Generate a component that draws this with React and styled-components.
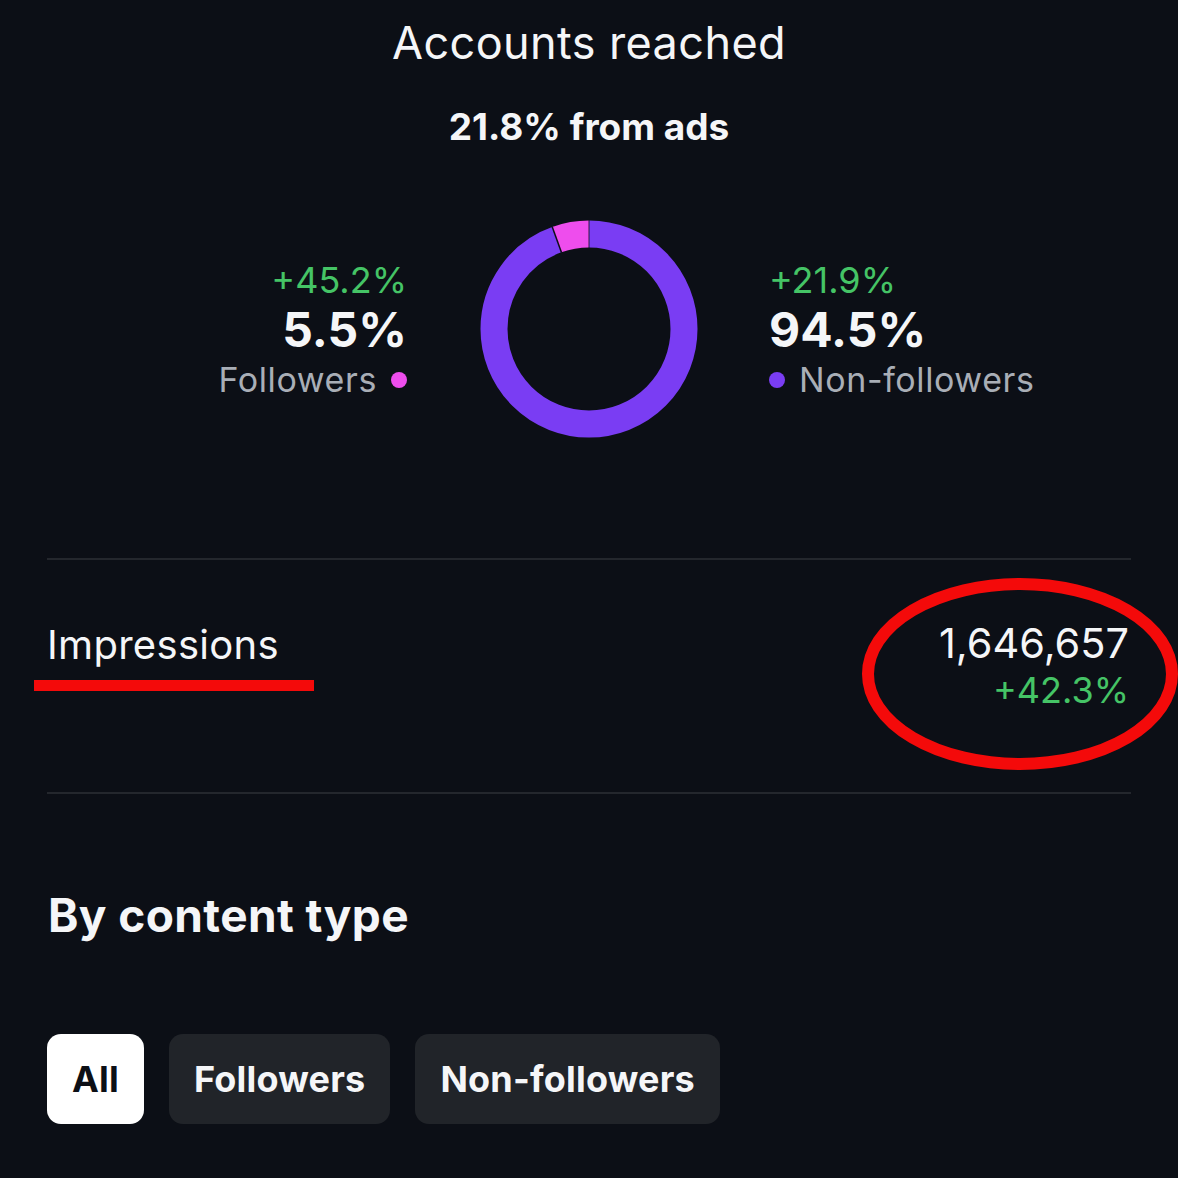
import React from 'react'
import styled, { createGlobalStyle } from 'styled-components'

const colors = {
  bg: '#0c0f16',
  text: '#f5f6f8',
  muted: '#a9aeb6',
  green: '#45c466',
  purple: '#7a3df3',
  pink: '#ee4ded',
  divider: '#24272d',
  chip: '#212429',
  red: '#f40a0a',
}

const GlobalStyle = createGlobalStyle`
  html, body {
    margin: 0;
    padding: 0;
    background: ${colors.bg};
    overflow: hidden;
  }
  body {
    font-family: Inter, "Noto Sans", "Liberation Sans", sans-serif;
    color: ${colors.text};
  }
`

const Page = styled.div`
  min-height: 1178px;
  padding: 16px 47px 0;
  box-sizing: border-box;
`

const Header = styled.header`
  display: flex;
  flex-direction: column;
  align-items: center;
`

const Title = styled.h1`
  margin: 0;
  font-size: 45px;
  line-height: 53px;
  font-weight: 400;
  letter-spacing: 0.4px;
`

const Subtitle = styled.div`
  margin-top: 37px;
  font-size: 37px;
  line-height: 41px;
  font-weight: 700;
`

const Breakdown = styled.section`
  display: grid;
  grid-template-columns: 1fr auto 1fr;
  align-items: center;
  column-gap: 74px;
  margin-top: 73px;
  padding-bottom: 120px;
  border-bottom: 2px solid ${colors.divider};
`

const Stat = styled.div`
  display: flex;
  flex-direction: column;
  align-items: ${p => (p.align === 'right' ? 'flex-end' : 'flex-start')};
  margin-top: 2px;
  margin-right: ${p => (p.align === 'right' ? '-1px' : '0')};
  margin-left: ${p => (p.align === 'left' ? '-3px' : '0')};
`

const Delta = styled.div`
  color: ${colors.green};
  font-size: ${p => p.size || 36}px;
  line-height: ${p => p.lh || 50}px;
  font-weight: 400;
`

const Percent = styled.div`
  font-size: 48px;
  line-height: 50px;
  font-weight: 700;
`

const Legend = styled.div`
  display: flex;
  align-items: center;
  gap: 14px;
  color: ${colors.muted};
  font-size: 34px;
  line-height: 50px;
  letter-spacing: 0.6px;
`

const Dot = styled.span`
  width: 16px;
  height: 16px;
  border-radius: 50%;
  background: ${p => p.color};
  flex: none;
`

const Donut = ({ share }) => {
  const r = 95
  const c = 2 * Math.PI * r
  const pinkLen = share * c
  const pinkAngle = share * 360
  const rad = (-pinkAngle * Math.PI) / 180
  return (
    <svg width="218" height="218" viewBox="0 0 218 218">
      <circle
        cx="109" cy="109" r={r} fill="none"
        stroke={colors.purple} strokeWidth="27"
        strokeDasharray={`${c - pinkLen} ${c}`}
        transform="rotate(-90 109 109)"
      />
      <circle
        cx="109" cy="109" r={r} fill="none"
        stroke={colors.pink} strokeWidth="27"
        strokeDasharray={`${pinkLen} ${c}`}
        transform={`rotate(${-90 - pinkAngle} 109 109)`}
      />
      <line
        x1={109 + 81 * Math.sin(rad)} y1={109 - 81 * Math.cos(rad)}
        x2={109 + 109 * Math.sin(rad)} y2={109 - 109 * Math.cos(rad)}
        stroke={colors.bg} strokeWidth="1.5"
      />
      <line x1="109" y1="0" x2="109" y2="28" stroke={colors.bg} strokeWidth="0.8" />
    </svg>
  )
}

const MetricRow = styled.section`
  position: relative;
  display: flex;
  justify-content: space-between;
  align-items: flex-start;
  padding: 60px 0 78px;
  border-bottom: 2px solid ${colors.divider};
`

const MetricLabel = styled.div`
  position: relative;
  font-size: 40px;
  line-height: 48px;
  font-weight: 400;
  letter-spacing: 0.3px;
  margin-top: 1px;
`

const MetricValue = styled.div`
  display: flex;
  flex-direction: column;
  align-items: flex-end;
  margin-right: 2px;
`

const BigNumber = styled.div`
  font-size: 41.5px;
  line-height: 47px;
  font-weight: 400;
`

// red hand-drawn annotations over the screenshot
const Underline = styled.span`
  position: absolute;
  left: -13px;
  top: 59px;
  width: 280px;
  height: 11px;
  background: ${colors.red};
`

const Circled = styled.svg`
  position: absolute;
  left: 812px;
  top: 15px;
  overflow: visible;
`

const SectionHeading = styled.h2`
  margin: 96px 0 0 1px;
  font-size: 46px;
  line-height: 50px;
  font-weight: 700;
  letter-spacing: 0.4px;
`

const Chips = styled.div`
  display: flex;
  gap: 25px;
  margin-top: 94px;
`

const Chip = styled.button`
  height: 90px;
  padding: 0 25px;
  border: none;
  border-radius: 14px;
  background: ${p => (p.active ? '#ffffff' : colors.chip)};
  color: ${p => (p.active ? '#0c0f16' : colors.text)};
  font-family: inherit;
  font-size: 36px;
  font-weight: 700;
  letter-spacing: 0.2px;
  cursor: pointer;
`

export default function App() {
  return (
    <>
      <GlobalStyle />
      <Page>
        <Header>
          <Title>Accounts reached</Title>
          <Subtitle>21.8% from ads</Subtitle>
        </Header>

        <Breakdown>
          <Stat align="right">
            <Delta>+45.2%</Delta>
            <Percent>5.5%</Percent>
            <Legend>
              Followers
              <Dot color={colors.pink} />
            </Legend>
          </Stat>
          <Donut share={0.055} />
          <Stat align="left">
            <Delta>+21.9%</Delta>
            <Percent>94.5%</Percent>
            <Legend>
              <Dot color={colors.purple} />
              Non-followers
            </Legend>
          </Stat>
        </Breakdown>

        <MetricRow>
          <MetricLabel>
            Impressions
            <Underline />
          </MetricLabel>
          <MetricValue>
            <BigNumber>1,646,657</BigNumber>
            <Delta size={36} lh={47}>+42.3%</Delta>
          </MetricValue>
          <Circled width="322" height="198" viewBox="0 0 322 198">
            <ellipse cx="161" cy="99" rx="152" ry="90" fill="none" stroke={colors.red} strokeWidth="12" />
          </Circled>
        </MetricRow>

        <SectionHeading>By content type</SectionHeading>

        <Chips>
          <Chip active>All</Chip>
          <Chip>Followers</Chip>
          <Chip>Non-followers</Chip>
        </Chips>
      </Page>
    </>
  )
}
